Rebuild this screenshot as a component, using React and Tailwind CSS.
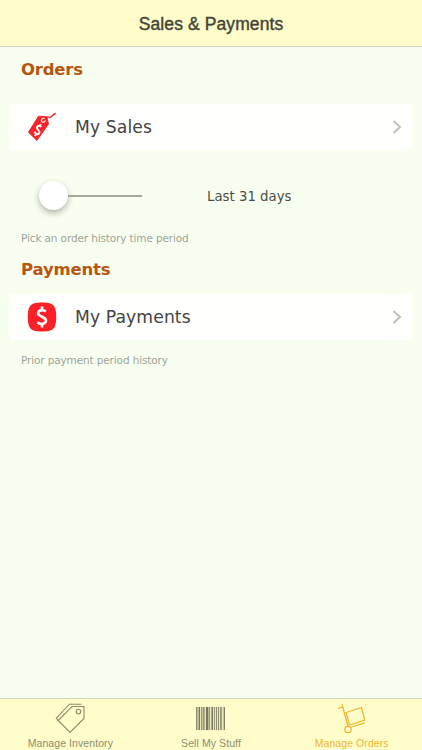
import clsx from "clsx";

function ChevronIcon() {
  return (
    <svg className="w-[10px] h-[16px] shrink-0" viewBox="0 0 10 16" fill="none" stroke="#bdbdbd" strokeWidth="1.9">
      <path d="M1.5 2 8 8 1.5 14" />
    </svg>
  );
}

function PriceTagIcon() {
  return (
    <svg className="w-[30px] h-[30px]" viewBox="0 0 30 30" fill="none">
      <path d="M11.500 4.300 19.800 4.800 21.500 12 9.900 28.500 1.500 20.200Z" fill="#f8242b" stroke="#f8242b" strokeLinejoin="round" />
      <path d="M17.500 8.500C17.500 4.500 20 5 22.500 5.200 25.500 5.400 25 2.400 28.800 1.500" stroke="#f8242b" strokeWidth="1.400" />
      <path d="M17.500 6.500C15.300 5.800 13.800 7.600 14.600 9.200 15.500 10.900 18 10.200 18.300 8.300" stroke="#fff" strokeWidth="1.1" />
      <path d="M14.200 14.800C12 12.600 9.300 14.400 10.200 16.700 11 18.600 13.400 19 12.300 21.100 11.200 23 8.300 22.200 7.500 19.800M12.800 14 14 12.300M9 22.200 7.800 24" stroke="#fff" strokeWidth="1.900" />
    </svg>
  );
}

function DollarIcon() {
  return (
    <svg className="w-[30px] h-[30px]" viewBox="0 0 30 30" fill="none">
      <path d="M15 .5C26 .5 29.200 3 29.200 15S26 29.500 15 29.500 .8 27 .8 15 4 .5 15 .5Z" fill="#fb2027" />
      <path d="M18.800 9.400C16 7.500 11.100 7.900 11.100 11.300 11.100 15 19 14.400 19 18.600 19 22.400 13.200 22.600 10.200 20.400M15 4.500V8.500M15 21.500V25.600" stroke="#fff" strokeWidth="2.600" />
    </svg>
  );
}

function TagsIcon() {
  return (
    <svg className="w-[30px] h-[31px]" viewBox="0 0 30 31" fill="none" stroke="#8c8c72" strokeWidth="1.1">
      <path d="M17 3.500H29V15.500L15 29.500 3.200 17.500Z" />
      <path d="M26.500 1.200H14.500L1.300 15 3.200 17.500" />
      <circle cx="23.500" cy="8.500" r="2.300" />
    </svg>
  );
}

// [x, width, opacity]
const bars = [
  [0, 1, 0.8], [1, 1, 0.4], [2, 1, 0.4], [3, 1, 1], [5, 1, 0.7], [6, 1, 0.3], [7, 1, 0.7],
  [8, 1, 0.5], [10, 2, 1], [12, 1, 0.4], [13, 1, 0.7], [15, 1, 0.5], [16, 1, 1],
  [18, 1, 0.7], [20, 1, 0.8], [22, 1, 0.8], [24, 1, 0.7], [25, 1, 0.6], [27, 1, 0.3], [28, 1, 0.9],
];

function BarcodeIcon() {
  return (
    <svg className="w-[30px] h-[31px]" viewBox="0 0 30 31" fill="#77775f" shapeRendering="crispEdges">
      <rect y="4" width="29" height="23" opacity="0.15" />
      {bars.map(([x, width, opacity]) => (
        <rect key={x} x={x} y="4" width={width} height="23" opacity={opacity} />
      ))}
    </svg>
  );
}

function HandTruckIcon() {
  return (
    <svg className="w-[30px] h-[31px]" viewBox="0 0 30 31" fill="none" stroke="#f0b52e" strokeWidth="1.3">
      <path d="M1 5.500 5.800 4 11 23.500M5.800 4 5 .8M13 24.500 27.800 19.800" />
      <path d="M9 9.500 24.500 4.500 27.800 17 12.500 22Z" />
      <circle cx="11" cy="26.500" r="3.200" />
    </svg>
  );
}

function SectionTitle({ children }) {
  return <h2 className="h-[22px] pl-[21px] text-[16.500px] leading-[24px] font-bold tracking-[-0.2px] text-[#b9540f]">{children}</h2>;
}

function MenuRow({ icon: Icon, label, className }) {
  return (
    <button className={clsx("mx-[10px] flex h-[46px] items-center bg-[#fffffd] pl-[17px] pr-[10px] text-left", className)}>
      <Icon />
      <span className="ml-[18px] flex-1 pt-[2px] text-[17.200px] tracking-[0.1px] text-[#444]">{label}</span>
      <ChevronIcon />
    </button>
  );
}

function Hint({ children, className }) {
  return <p className={clsx("pl-[21px] text-[10.500px] leading-4 tracking-[-0.13px] text-[#9da398]", className)}>{children}</p>;
}

const tabs = [
  { label: "Manage Inventory", icon: TagsIcon },
  { label: "Sell My Stuff", icon: BarcodeIcon },
  { label: "Manage Orders", icon: HandTruckIcon, active: true },
];

export default function App() {
  return (
    <div className="flex h-screen w-full flex-col overflow-hidden bg-[#f9fff0] font-['DejaVu_Sans',sans-serif]">
      <header className="flex h-[47px] shrink-0 items-center justify-center border-b border-[#d5d5bd] bg-[#fffdc9] font-['Liberation_Sans',sans-serif]">
        <h1 className="pt-[2px] text-[17.500px] leading-6 tracking-[0.1px] text-[#444438] [-webkit-text-stroke:0.4px_#444438]">Sales &amp; Payments</h1>
      </header>

      <main className="flex flex-1 flex-col pt-[11px]">
        <SectionTitle>Orders</SectionTitle>
        <MenuRow icon={PriceTagIcon} label="My Sales" className="mt-[24px]" />

        <div className="mt-[30px] flex h-[32px] items-center pl-[39px]">
          <div className="flex w-[103px] items-center">
            <div className="mb-[2px] size-[29px] shrink-0 rounded-full bg-white shadow-[0_3px_6px_rgba(0,0,0,0.3)]" />
            <div className="h-[2px] flex-1 bg-[#a4a8a0]" />
          </div>
          <span className="ml-[65px] pt-[2px] text-[13.300px] text-[#4a4d47]">Last 31 days</span>
        </div>
        <Hint className="mt-[18px]">Pick an order history time period</Hint>

        <div className="h-[12px]" />
        <SectionTitle>Payments</SectionTitle>
        <MenuRow icon={DollarIcon} label="My Payments" className="mt-[14px]" />
        <Hint className="mt-[12px]">Prior payment period history</Hint>
      </main>

      <nav className="grid h-[52px] shrink-0 grid-cols-3 border-t border-[#d5d5c0] bg-[#fffdc9] font-['Liberation_Sans',sans-serif]">
        {tabs.map(({ label, icon: Icon, active }) => (
          <button key={label} className={clsx("flex flex-col items-center pt-[4px]", active ? "text-[#f0b52e]" : "text-[#8c8c76]")}>
            <Icon />
            <span className="mt-[1px] text-[10.500px] leading-[16px] tracking-[0.08px]">{label}</span>
          </button>
        ))}
      </nav>
    </div>
  );
}
